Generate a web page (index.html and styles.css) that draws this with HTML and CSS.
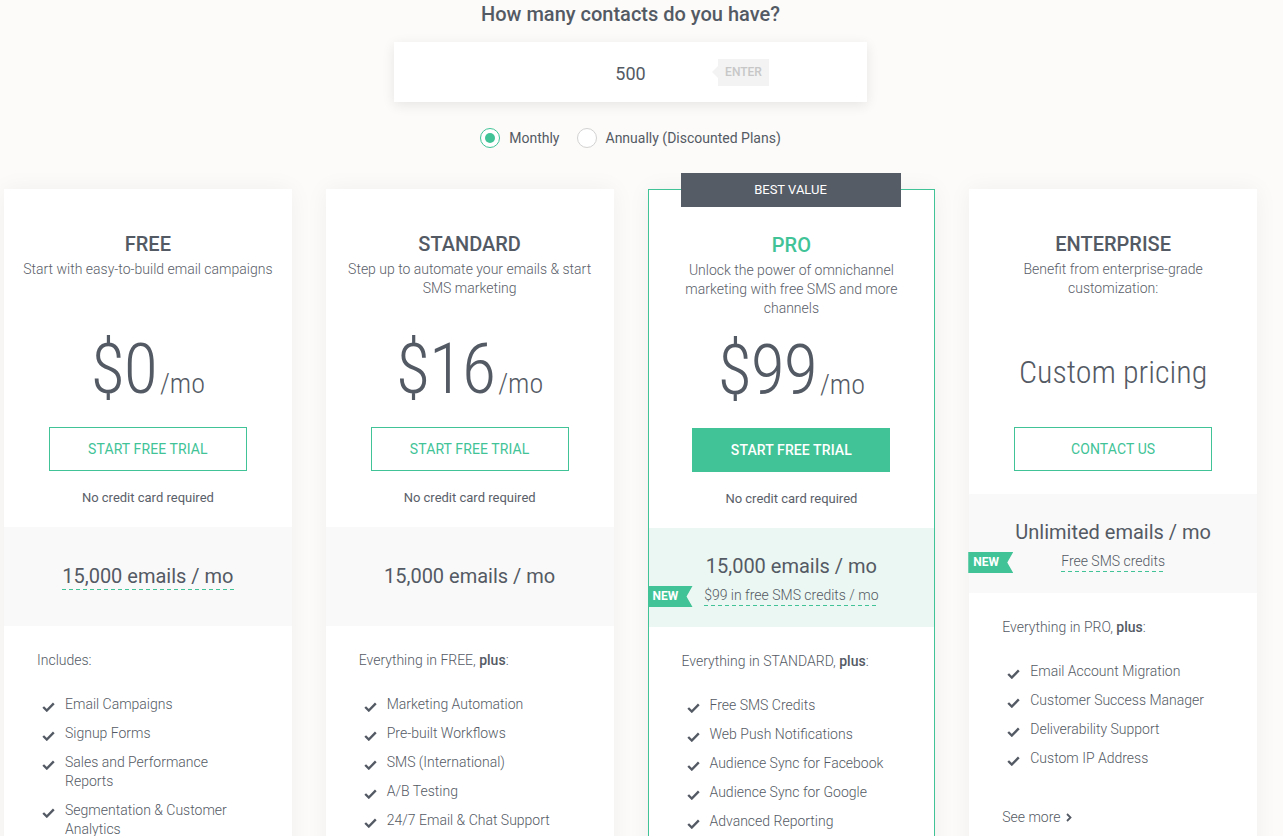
FILE: index.html
```html
<!DOCTYPE html>
<html lang="en">
<head>
<meta charset="utf-8">
<title>Pricing</title>
<link rel="stylesheet" href="styles.css">
</head>
<body>
<div class="page">
  <h1 class="question">How many contacts do you have?</h1>
  <div class="contacts-box">
    <span class="contacts-value">500</span>
    <span class="enter-tag">ENTER</span>
  </div>
  <div class="billing">
    <div class="radio"><span class="radio-dot checked"></span>Monthly</div>
    <div class="radio"><span class="radio-dot"></span>Annually (Discounted Plans)</div>
  </div>

  <div class="plans">
    <!-- FREE -->
    <div class="card">
      <div class="head">
        <h2 class="plan-name">FREE</h2>
        <p class="plan-desc">Start with easy-to-build email campaigns</p>
      </div>
      <div class="price"><span class="amount">$0</span><span class="per">/mo</span></div>
      <a class="btn">START FREE TRIAL</a>
      <p class="note">No credit card required</p>
      <div class="band single"><span class="band-main dashed big">15,000 emails / mo</span></div>
      <div class="features">
        <p class="intro">Includes:</p>
        <ul class="list">
          <li><svg class="check" viewBox="0 0 13 10"><path d="M1.2 5 L4.8 8.5 L11.8 1.4"/></svg><span>Email Campaigns</span></li>
          <li><svg class="check" viewBox="0 0 13 10"><path d="M1.2 5 L4.8 8.5 L11.8 1.4"/></svg><span>Signup Forms</span></li>
          <li><svg class="check" viewBox="0 0 13 10"><path d="M1.2 5 L4.8 8.5 L11.8 1.4"/></svg><span>Sales and Performance Reports</span></li>
          <li><svg class="check" viewBox="0 0 13 10"><path d="M1.2 5 L4.8 8.5 L11.8 1.4"/></svg><span>Segmentation &amp; Customer Analytics</span></li>
        </ul>
      </div>
    </div>

    <!-- STANDARD -->
    <div class="card">
      <div class="head">
        <h2 class="plan-name">STANDARD</h2>
        <p class="plan-desc">Step up to automate your emails &amp; start SMS marketing</p>
      </div>
      <div class="price"><span class="amount">$16</span><span class="per">/mo</span></div>
      <a class="btn">START FREE TRIAL</a>
      <p class="note">No credit card required</p>
      <div class="band single"><span class="band-main">15,000 emails / mo</span></div>
      <div class="features">
        <p class="intro">Everything in FREE, <b>plus</b>:</p>
        <ul class="list">
          <li><svg class="check" viewBox="0 0 13 10"><path d="M1.2 5 L4.8 8.5 L11.8 1.4"/></svg><span>Marketing Automation</span></li>
          <li><svg class="check" viewBox="0 0 13 10"><path d="M1.2 5 L4.8 8.5 L11.8 1.4"/></svg><span>Pre-built Workflows</span></li>
          <li><svg class="check" viewBox="0 0 13 10"><path d="M1.2 5 L4.8 8.5 L11.8 1.4"/></svg><span>SMS (International)</span></li>
          <li><svg class="check" viewBox="0 0 13 10"><path d="M1.2 5 L4.8 8.5 L11.8 1.4"/></svg><span>A/B Testing</span></li>
          <li><svg class="check" viewBox="0 0 13 10"><path d="M1.2 5 L4.8 8.5 L11.8 1.4"/></svg><span>24/7 Email &amp; Chat Support</span></li>
        </ul>
      </div>
    </div>

    <!-- PRO -->
    <div class="card pro">
      <div class="best-value">BEST VALUE</div>
      <div class="head">
        <h2 class="plan-name green">PRO</h2>
        <p class="plan-desc">Unlock the power of omnichannel marketing with free SMS and more channels</p>
      </div>
      <div class="price"><span class="amount">$99</span><span class="per">/mo</span></div>
      <a class="btn solid">START FREE TRIAL</a>
      <p class="note">No credit card required</p>
      <div class="band double green-band">
        <div class="band-main">15,000 emails / mo</div>
        <div class="band-sub-row">
          <span class="ribbon">NEW</span>
          <span class="dashed">$99 in free SMS credits / mo</span>
        </div>
      </div>
      <div class="features">
        <p class="intro">Everything in STANDARD, <b>plus</b>:</p>
        <ul class="list">
          <li><svg class="check" viewBox="0 0 13 10"><path d="M1.2 5 L4.8 8.5 L11.8 1.4"/></svg><span>Free SMS Credits</span></li>
          <li><svg class="check" viewBox="0 0 13 10"><path d="M1.2 5 L4.8 8.5 L11.8 1.4"/></svg><span>Web Push Notifications</span></li>
          <li><svg class="check" viewBox="0 0 13 10"><path d="M1.2 5 L4.8 8.5 L11.8 1.4"/></svg><span>Audience Sync for Facebook</span></li>
          <li><svg class="check" viewBox="0 0 13 10"><path d="M1.2 5 L4.8 8.5 L11.8 1.4"/></svg><span>Audience Sync for Google</span></li>
          <li><svg class="check" viewBox="0 0 13 10"><path d="M1.2 5 L4.8 8.5 L11.8 1.4"/></svg><span>Advanced Reporting</span></li>
        </ul>
      </div>
    </div>

    <!-- ENTERPRISE -->
    <div class="card">
      <div class="head">
        <h2 class="plan-name">ENTERPRISE</h2>
        <p class="plan-desc">Benefit from enterprise-grade customization:</p>
      </div>
      <div class="price custom">Custom pricing</div>
      <a class="btn">CONTACT US</a>
      <div class="band double enterprise-band">
        <div class="band-main">Unlimited emails / mo</div>
        <div class="band-sub-row">
          <span class="ribbon">NEW</span>
          <span class="dashed">Free SMS credits</span>
        </div>
      </div>
      <div class="features">
        <p class="intro">Everything in PRO, <b>plus</b>:</p>
        <ul class="list">
          <li><svg class="check" viewBox="0 0 13 10"><path d="M1.2 5 L4.8 8.5 L11.8 1.4"/></svg><span>Email Account Migration</span></li>
          <li><svg class="check" viewBox="0 0 13 10"><path d="M1.2 5 L4.8 8.5 L11.8 1.4"/></svg><span>Customer Success Manager</span></li>
          <li><svg class="check" viewBox="0 0 13 10"><path d="M1.2 5 L4.8 8.5 L11.8 1.4"/></svg><span>Deliverability Support</span></li>
          <li><svg class="check" viewBox="0 0 13 10"><path d="M1.2 5 L4.8 8.5 L11.8 1.4"/></svg><span>Custom IP Address</span></li>
        </ul>
        <a class="see-more">See more<svg class="chev" viewBox="0 0 6 9"><path d="M1 1 L4.5 4.5 L1 8"/></svg></a>
      </div>
    </div>
  </div>
</div>
</body>
</html>
```
FILE: styles.css
```css
* { box-sizing: border-box; }
html, body { margin: 0; padding: 0; }
body {
  background: #fcfbf9;
  font-family: Roboto, "Liberation Sans", Arial, sans-serif;
  color: #545a64;
}
.page {
  width: 1261px;
  padding: 2px 4px 0;
}
.question {
  margin: 0;
  font-size: 20px;
  font-weight: 500;
  line-height: 24px;
  text-align: center;
}
.contacts-box {
  position: relative;
  width: 473px;
  height: 60px;
  margin: 16px auto 0;
  background: #fff;
  box-shadow: 0 3px 12px rgba(0, 0, 0, 0.09);
  display: flex;
  align-items: center;
  justify-content: center;
  font-size: 18px;
  padding-top: 3px;
}
.contacts-value { line-height: 22px; }
.enter-tag {
  position: absolute;
  left: 324px;
  top: 17px;
  width: 51px;
  height: 27px;
  background: #f3f3f3;
  color: #c7c7c7;
  font-size: 12px;
  font-weight: 500;
  line-height: 27px;
  text-align: center;
}
.enter-tag::before {
  content: "";
  position: absolute;
  left: -6px;
  top: 7px;
  border-right: 6px solid #f3f3f3;
  border-top: 6px solid transparent;
  border-bottom: 6px solid transparent;
}
.billing {
  margin-top: 26px;
  display: flex;
  justify-content: center;
  gap: 17px;
  font-size: 14px;
  line-height: 20px;
}
.radio {
  display: flex;
  align-items: center;
  gap: 9px;
}
.radio-dot {
  width: 20px;
  height: 20px;
  border-radius: 50%;
  border: 1.5px solid #d2d2d2;
  background: #fff;
  display: flex;
  align-items: center;
  justify-content: center;
}
.radio-dot.checked { border-color: #41c397; }
.radio-dot.checked::after {
  content: "";
  width: 10px;
  height: 10px;
  border-radius: 50%;
  background: #41c397;
}

.plans {
  margin-top: 41px;
  display: grid;
  grid-template-columns: repeat(4, 1fr);
  column-gap: 34px;
}
.card {
  position: relative;
  background: #fff;
  box-shadow: 0 0 22px rgba(0, 0, 0, 0.05);
  text-align: center;
  padding-top: 44px;
  padding-bottom: 40px;
}
.card.pro { border: 1px solid #41c397; }
.best-value {
  position: absolute;
  top: -17px;
  left: 32px;
  width: 220px;
  height: 34px;
  background: #565c66;
  color: #fff;
  font-size: 13px;
  line-height: 34px;
  text-align: center;
}
.head {
  height: 103px;
  padding: 0 14px;
}
.plan-name {
  margin: 0;
  font-size: 20px;
  font-weight: 500;
  line-height: 22px;
}
.plan-name.green { color: #41c397; }
.plan-desc {
  margin: 5px 0 0;
  font-size: 14px;
  font-weight: 300;
  line-height: 19px;
  color: #5a6069;
}
.price {
  height: 70px;
  line-height: 66px;
  font-family: "Roboto Condensed", Roboto, sans-serif;
  font-weight: 300;
  font-size: 70px;
  white-space: nowrap;
}
.price .amount { letter-spacing: -1px; }
.price .per {
  font-size: 28px;
  line-height: 1;
  margin-left: 3px;
}
.price.custom {
  font-size: 32px;
  line-height: 72px;
}
.btn {
  display: flex;
  align-items: center;
  justify-content: center;
  width: 198px;
  height: 44px;
  margin: 21px auto 0;
  border: 1px solid #41c397;
  color: #41c397;
  font-size: 14px;
  letter-spacing: 0.1px;
}
.btn.solid {
  background: #41c397;
  color: #fff;
  font-weight: 500;
}
.note {
  margin: 18px 0 0;
  font-size: 13px;
  line-height: 18px;
  color: #5a6069;
}
.band {
  height: 99px;
  margin-top: 20px;
  background: #f9f9f9;
  padding-top: 26px;
}
.band.single { padding-top: 37px; }
.band.green-band { background: #ebf7f2; }
.band.enterprise-band { margin-top: 23px; }
.band-main {
  display: inline-block;
  font-size: 20px;
  line-height: 24px;
}
.band.double .band-main { display: block; }
.band-sub-row {
  position: relative;
  margin-top: 8px;
  font-size: 14px;
  font-weight: 300;
  line-height: 19px;
}
.dashed {
  display: inline-block;
  padding-bottom: 1px;
  background-image: linear-gradient(to right, #41c397 60%, transparent 60%);
  background-size: 7px 1px;
  background-position: left bottom;
  background-repeat: repeat-x;
}
.dashed.big { padding-bottom: 2px; }
.ribbon {
  position: absolute;
  left: -1px;
  top: 50%;
  margin-top: -10px;
  width: 45px;
  height: 21px;
  padding-left: 5px;
  background: #41c397;
  color: #fff;
  font-size: 12px;
  font-weight: 700;
  line-height: 21px;
  text-align: left;
  clip-path: polygon(0 0, 100% 0, calc(100% - 6px) 50%, 100% 100%, 0 100%);
}
.features {
  padding: 25px 33px 0;
  text-align: left;
}
.intro {
  margin: 0;
  font-size: 14px;
  font-weight: 300;
  line-height: 19px;
}
.intro b { font-weight: 500; }
.list {
  list-style: none;
  margin: 25px 0 0;
  padding: 0;
}
.list li {
  display: flex;
  align-items: flex-start;
  font-size: 14px;
  font-weight: 300;
  line-height: 19px;
  margin-bottom: 10px;
}
.check {
  flex: none;
  width: 13px;
  height: 10px;
  margin: 7px 10px 0 5px;
  fill: none;
  stroke: #545a64;
  stroke-width: 2.4;
}
.see-more {
  display: inline-flex;
  align-items: center;
  margin-top: 30px;
  font-size: 14px;
  font-weight: 300;
  line-height: 19px;
}
.chev {
  width: 6px;
  height: 9px;
  margin-left: 5px;
  fill: none;
  stroke: #545a64;
  stroke-width: 1.8;
}
```
